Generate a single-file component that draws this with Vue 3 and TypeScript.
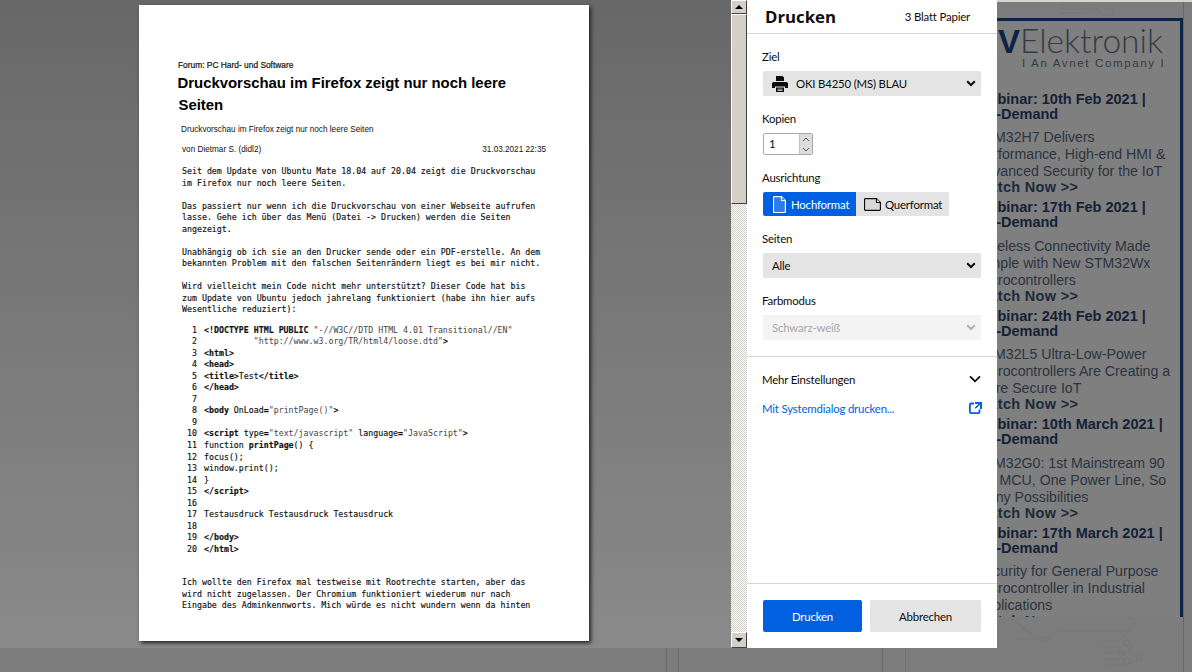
<script setup lang="ts">
interface Seg { t: string; c?: string }
const code: Seg[][] = [
  [{ t: '<!DOCTYPE HTML PUBLIC ', c: 'b' }, { t: '"-//W3C//DTD HTML 4.01 Transitional//EN"', c: 's' }],
  [{ t: '          ' }, { t: '"http://www.w3.org/TR/html4/loose.dtd"', c: 's' }, { t: '>', c: 'b' }],
  [{ t: '<html>', c: 'b' }],
  [{ t: '<head>', c: 'b' }],
  [{ t: '<title>', c: 'b' }, { t: 'Test' }, { t: '</title>', c: 'b' }],
  [{ t: '</head>', c: 'b' }],
  [],
  [{ t: '<body ', c: 'b' }, { t: 'OnLoad' }, { t: '=', c: 'b' }, { t: '"printPage()"', c: 's' }, { t: '>', c: 'b' }],
  [],
  [{ t: '<script ', c: 'b' }, { t: 'type' }, { t: '=', c: 'b' }, { t: '"text/javascript"', c: 's' }, { t: ' language' }, { t: '=', c: 'b' }, { t: '"JavaScript"', c: 's' }, { t: '>', c: 'b' }],
  [{ t: 'function ' }, { t: 'printPage', c: 'b' }, { t: '() {' }],
  [{ t: 'focus();' }],
  [{ t: 'window.print();' }],
  [{ t: '}' }],
  [{ t: '</' + 'script>', c: 'b' }],
  [],
  [{ t: 'Testausdruck Testausdruck Testausdruck' }],
  [],
  [{ t: '</body>', c: 'b' }],
  [{ t: '</html>', c: 'b' }],
]
const paragraphs: string[][] = [
  ['Seit dem Update von Ubuntu Mate 18.04 auf 20.04 zeigt die Druckvorschau', 'im Firefox nur noch leere Seiten.'],
  ['Das passiert nur wenn ich die Druckvorschau von einer Webseite aufrufen', 'lasse. Gehe ich über das Menü (Datei -> Drucken) werden die Seiten', 'angezeigt.'],
  ['Unabhängig ob ich sie an den Drucker sende oder ein PDF-erstelle. An dem', 'bekannten Problem mit den falschen Seitenrändern liegt es bei mir nicht.'],
  ['Wird vielleicht mein Code nicht mehr unterstützt? Dieser Code hat bis', 'zum Update von Ubuntu jedoch jahrelang funktioniert (habe ihn hier aufs', 'Wesentliche reduziert):'],
]
const tail: string[] = [
  'Ich wollte den Firefox mal testweise mit Rootrechte starten, aber das',
  'wird nicht zugelassen. Der Chromium funktioniert wiederum nur nach',
  'Eingabe des Adminkennworts. Mich würde es nicht wundern wenn da hinten',
]
interface Webinar { head: string[]; body: string[] }
const webinars: Webinar[] = [
  { head: ['Webinar: 10th Feb 2021 |', 'On-Demand'], body: ['STM32H7 Delivers', 'Performance, High-end HMI &', 'Advanced Security for the IoT'] },
  { head: ['Webinar: 17th Feb 2021 |', 'On-Demand'], body: ['Wireless Connectivity Made', 'Simple with New STM32Wx', 'Microcontrollers'] },
  { head: ['Webinar: 24th Feb 2021 |', 'On-Demand'], body: ['STM32L5 Ultra-Low-Power', 'Microcontrollers Are Creating a', 'More Secure IoT'] },
  { head: ['Webinar: 10th March 2021 |', 'On-Demand'], body: ['STM32G0: 1st Mainstream 90', 'nm MCU, One Power Line, So', 'Many Possibilities'] },
  { head: ['Webinar: 17th March 2021 |', 'On-Demand'], body: ['Security for General Purpose', 'Microcontroller in Industrial', 'Applications'] },
]
</script>

<template>
  <div class="screen">
    <div class="backdrop">
      <div class="topstrip"></div>
      <i class="vl l1"></i><i class="vl l2"></i><i class="vl l3"></i><i class="vl l4"></i><i class="vl l5"></i>
      <svg class="circuit top" width="70" height="18" viewBox="0 0 70 18" fill="none" stroke="#777">
        <path d="M0 3 H32 L44 14 M0 7 H30 L40 15 M0 11 H26 L32 17" /><circle cx="47" cy="5" r="2" /><circle cx="52" cy="10" r="2" /><circle cx="46" cy="15" r="2" />
      </svg>
      <div class="ad">
        <div class="logo"><b>V</b><span>Elektronik</span></div>
        <div class="tagline">I An Avnet Company I</div>
        <div v-for="w in webinars" :key="w.head[0]" class="webinar">
          <div class="w-head"><div v-for="h in w.head" :key="h">{{ h }}</div></div>
          <div class="w-body"><div v-for="b in w.body" :key="b">{{ b }}</div></div>
          <div class="w-cta">Watch Now &gt;&gt;</div>
        </div>
      </div>
      <svg class="circuit bottom" width="190" height="55" viewBox="0 0 190 55" fill="none" stroke="#787878" stroke-width="1.200">
        <path d="M15 2 L38 20 H55 M62 14 H130 L136 6 H140 M105 24 H122 L135 12 M105 30 H125 M105 36 H128 L138 28 M105 42 H130 M110 48 H128 L142 42 M20 22 H50" />
        <circle cx="48" cy="22" r="3" /><circle cx="130" cy="26" r="3" /><circle cx="124" cy="36" r="3" /><circle cx="130" cy="44" r="3" /><circle cx="142" cy="40" r="3" />
      </svg>
    </div>

    <div class="dialog">
      <div class="preview">
        <div class="sheet">
          <div class="forum">Forum: PC Hard- und Software</div>
          <h1 class="title">Druckvorschau im Firefox zeigt nur noch leere<br><span class="title2">Seiten</span></h1>
          <div class="sub">Druckvorschau im Firefox zeigt nur noch leere Seiten</div>
          <div class="meta"><span>von Dietmar S. (didl2)</span><span>31.03.2021 22:35</span></div>
          <div class="mono body">
            <p v-for="(p, i) in paragraphs" :key="i"><span v-for="l in p" :key="l" class="ln">{{ l }}</span></p>
          </div>
          <div class="mono listing">
            <div v-for="(row, i) in code" :key="i" class="row">
              <span class="num">{{ i + 1 }}</span>
              <span class="src"><span v-for="(s, j) in row" :key="j" :class="s.c">{{ s.t }}</span></span>
            </div>
          </div>
          <div class="mono tail"><span v-for="l in tail" :key="l" class="ln">{{ l }}</span></div>
        </div>
      </div>

      <div class="scrollbar">
        <div class="sb-btn up"><i class="tri tri-up"></i></div>
        <div class="sb-thumb"></div>
        <div class="sb-track"></div>
        <div class="sb-btn down"><i class="tri tri-down"></i></div>
      </div>

      <aside class="panel">
        <header class="p-head">
          <span class="p-title">Drucken</span>
          <span class="p-sheets">3 Blatt Papier</span>
        </header>
        <div class="p-form">
          <label class="lbl">Ziel</label>
          <div class="select dest">
            <svg class="printer" width="16" height="16" viewBox="0 0 16 16" fill="#0c0c0d">
              <path fill-rule="evenodd" d="M4 0h6.500L12 1.500V5H4V0zM1.800 6h12.400c1 0 1.800.8 1.800 1.800V12h-3v-1.500H3V12H0V7.800C0 6.800.8 6 1.800 6zM4 11.500h8V16H4v-4.500zM5.500 12.800v.8h5v-.8h-5zm0 1.500v.6h5v-.6h-5z" />
            </svg>
            <span>OKI B4250 (MS) BLAU</span>
            <svg class="chev" width="10" height="7" viewBox="0 0 10 7"><path d="M1.200 1.300 5 5l3.800-3.700" fill="none" stroke="#0c0c0d" stroke-width="2" /></svg>
          </div>
          <label class="lbl">Kopien</label>
          <div class="spin">
            <span class="spin-val">1</span>
            <span class="spin-btns">
              <span class="spin-btn"><svg width="8" height="5" viewBox="0 0 8 5"><path d="M1 4 4 1l3 3" fill="none" stroke="#555" /></svg></span>
              <span class="spin-btn"><svg width="8" height="5" viewBox="0 0 8 5"><path d="M1 1l3 3 3-3" fill="none" stroke="#555" /></svg></span>
            </span>
          </div>
          <label class="lbl">Ausrichtung</label>
          <div class="seg">
            <span class="seg-on">
              <svg width="13" height="17" viewBox="0 0 13 17" fill="#2b7de9" stroke="#fff" stroke-width="1.200"><path d="M1.500.6h7l3.900 3.900v11a1 1 0 0 1-1 1h-9.900a1 1 0 0 1-1-1v-14a1 1 0 0 1 1-.9z" /><path d="M8.500.6v3.900h3.900" /></svg>
              <span>Hochformat</span>
            </span>
            <span class="seg-off">
              <svg width="17" height="13" viewBox="0 0 17 13" fill="#d8d8d8" stroke="#0c0c0d" stroke-width="1.200"><path d="M1.500.6h11l3.900 3.900v7a1 1 0 0 1-1 .9h-13.900a1 1 0 0 1-1-.9v-10a1 1 0 0 1 1-.9z" /><path d="M12.500.6v3.900h3.900" /></svg>
              <span>Querformat</span>
            </span>
          </div>
          <label class="lbl">Seiten</label>
          <div class="select plain">
            <span>Alle</span>
            <svg class="chev" width="10" height="7" viewBox="0 0 10 7"><path d="M1.200 1.300 5 5l3.800-3.700" fill="none" stroke="#0c0c0d" stroke-width="2" /></svg>
          </div>
          <label class="lbl">Farbmodus</label>
          <div class="select plain off">
            <span>Schwarz-weiß</span>
            <svg class="chev" width="10" height="7" viewBox="0 0 10 7"><path d="M1.200 1.300 5 5l3.800-3.700" fill="none" stroke="#b1b1b1" stroke-width="2" /></svg>
          </div>
        </div>
        <div class="p-more">
          <div class="more-row">
            <span>Mehr Einstellungen</span>
            <svg width="12" height="8" viewBox="0 0 12 8"><path d="M1 1.300l5 5 5-5" fill="none" stroke="#0c0c0d" stroke-width="1.800" /></svg>
          </div>
          <div class="sys-row">
            <span>Mit Systemdialog drucken...</span>
            <svg width="12" height="12" viewBox="0 0 12 12" fill="none" stroke="#0060df" stroke-width="1.800"><path d="M5 1.500H2.200A1.300 1.300 0 0 0 .9 2.800v7a1.300 1.300 0 0 0 1.300 1.300h7a1.300 1.300 0 0 0 1.300-1.300V7.500" /></svg>
          </div>
        </div>
        <footer class="p-foot">
          <span class="btn primary">Drucken</span>
          <span class="btn">Abbrechen</span>
        </footer>
      </aside>
    </div>
  </div>
</template>

<style>
html, body { margin: 0; padding: 0; overflow: hidden; background: #7a7a7a; }
</style>

<style scoped>
.screen { position: relative; width: 1192px; height: 672px; overflow: hidden; font-family: "Lato", "Open Sans", sans-serif; background: #7c7c7c; }

/* dimmed page beneath the print dialog */
.backdrop { position: absolute; inset: 0; }
.topstrip { position: absolute; left: 0; right: 0; top: 0; height: 2px; background: #d8d4cc; }
.vl { position: absolute; top: 648px; bottom: 0; width: 1px; background: #6c6c6c; }
.l1 { left: 666px; } .l2 { left: 678px; } .l3 { left: 882px; } .l4 { left: 905px; background: #747474; }
.l5 { left: 1183px; top: 2px; background: #666; }
.ad {
  position: absolute; left: 965px; top: 18px; width: 215px; height: 596px; overflow: hidden;
  border-top: 3px solid #0c2344; border-right: 3px solid #0c2344; background: #7f7f7f; color: #1d2a3a;
  font-family: "Liberation Sans", Arial, sans-serif;
}
.logo { display: flex; align-items: baseline; height: 37px; padding: 1px 0 0 12px; box-sizing: border-box; color: #333b46; font-family: "Lato", "Open Sans", sans-serif; font-size: 33.500px; line-height: 36px; font-weight: 300; }
.logo b { font-family: "Liberation Sans", sans-serif; font-size: 33px; font-weight: 700; color: #0c2344; margin-left: 21px; }
.tagline { margin: -2px 0 0 57px; font-size: 11.500px; letter-spacing: 1.650px; color: #333b46; line-height: 14px; white-space: nowrap; }
.webinar { margin-left: 11px; height: 108.500px; }
.tagline + .webinar { margin-top: 19.500px; }
.w-head { font-weight: 700; font-size: 14.500px; line-height: 15px; color: #142238; white-space: nowrap; padding-top: 2px; }
.w-body { margin-top: 7.500px; font-size: 14.150px; line-height: 17px; color: #2b3440; white-space: nowrap; }
.w-cta { margin-top: -1px; font-weight: 700; font-size: 14.500px; letter-spacing: .3px; line-height: 17px; color: #1d2a3a; }
.circuit { position: absolute; }
.circuit.top { left: 1060px; top: 2px; }
.circuit.bottom { left: 997px; top: 617px; }

/* dialog row */
.dialog { position: absolute; left: 0; top: 0; width: 997px; height: 648px; display: flex; }
.preview { width: 731px; height: 648px; background: linear-gradient(180deg, #686868, #8a8a8a); overflow: hidden; }
.sheet {
  width: 450px; height: 636px; margin: 5px 0 0 139px; background: #fff; overflow: hidden; box-sizing: border-box; padding-top: 55px; color: #111;
  box-shadow: 2px 2px 4px #222; font-family: "Liberation Sans", Arial, sans-serif;
}
.forum { margin-left: 39px; font-size: 8.400px; line-height: 10px; -webkit-text-stroke: .2px #111; }
.title { margin: 2px 0 0 38.500px; font-size: 14.900px; line-height: 22px; font-weight: 700; color: #000; }
.title2 { margin-left: 1px; }
.sub { margin: 9px 0 0 42px; font-size: 8.200px; line-height: 10px; }
.meta { margin: 10px 43px 0 43px; display: flex; justify-content: space-between; font-size: 8.200px; line-height: 10px; }
.mono { font-family: "DejaVu Sans Mono", "Liberation Mono", monospace; font-size: 8.280px; line-height: 11.500px; color: #111; white-space: pre; -webkit-text-stroke: .15px #111; }
.ln { display: block; }
.body { margin: 11px 0 0 43px; }
.body p { margin: 0 0 11.500px; }
.listing { margin: -2.500px 0 0 0; }
.row { display: flex; height: 11.550px; }
.num { width: 58px; text-align: right; flex: none; }
.src { margin-left: 7px; }
.b { font-weight: 700; }
.s { color: #444; -webkit-text-stroke: 0; }
.tail { margin: 22px 0 0 43px; }

/* scrollbar */
.scrollbar { width: 16px; height: 648px; display: flex; flex-direction: column; flex: none; }
.sb-btn { height: 16px; flex: none; box-sizing: border-box; background: #d4d0c8; border: 1px solid; border-color: #fff #404040 #404040 #fff; display: flex; align-items: center; justify-content: center; }
.up { height: 14px; }
.tri { width: 0; height: 0; border-left: 4px solid transparent; border-right: 4px solid transparent; }
.tri-up { border-bottom: 4px solid #000; }
.tri-down { border-top: 4px solid #000; }
.sb-thumb { height: 190px; flex: none; box-sizing: border-box; background: #d4d0c8; border: 1px solid; border-color: #fff #404040 #404040 #fff; }
.sb-track { flex: 1; background: repeating-conic-gradient(#d4d0c8 0 25%, #fff 0 50%) 0 0 / 2px 2px; }

/* panel */
.panel { width: 250px; height: 648px; background: #fff; display: flex; flex-direction: column; flex: none; color: #0c0c0d; font-size: 11.400px; letter-spacing: -.18px; }
.p-head { height: 33px; flex: none; border-bottom: 1px solid #d7d7db; display: flex; align-items: center; justify-content: space-between; padding: 0 27px 0 18px; }
.p-title { font-size: 16.800px; font-weight: 700; font-family: "Open Sans", sans-serif; letter-spacing: 0; }
.p-form { padding: 0 16px; height: 322px; flex: none; border-bottom: 1px solid #d7d7db; }
.lbl { display: block; height: 16px; line-height: 16px; margin: 15px 0 6px -1px; }
.select { height: 25px; border-radius: 2px; background: #e4e4e4; display: flex; align-items: center; padding: 0 5px 0 9px; }
.select .chev { margin-left: auto; }
.dest { gap: 8px; }
.off { background: #f3f3f3; color: #a8a8a8; }
.spin { width: 50px; height: 22px; box-sizing: border-box; border: 1px solid #a9a9a9; border-radius: 2px; display: flex; }
.spin-val { flex: 1; padding-left: 5px; line-height: 20px; }
.spin-btns { width: 12px; display: flex; flex-direction: column; background: #dcdcdc; border-left: 1px solid #c4c4c4; }
.spin-btn { flex: 1; display: flex; align-items: center; justify-content: center; }
.seg { display: flex; width: max-content; height: 24px; border-radius: 2px; overflow: hidden; }
.seg-on, .seg-off { display: flex; align-items: center; box-sizing: border-box; }
.seg svg { flex: none; }
.seg-on { width: 93px; background: #0060df; color: #fff; padding-left: 10px; gap: 5px; }
.seg-off { width: 93px; background: #e4e4e4; padding-left: 8px; gap: 4px; }
.p-more { flex: 1; padding: 0 16px; }
.more-row, .sys-row { display: flex; align-items: center; justify-content: space-between; }
.more-row { margin-top: 14px; height: 16px; margin-left: -1px; }
.sys-row { margin-top: 13px; height: 16px; color: #0060df; margin-left: -1px; position: relative; }
.sys-row::after { content: ""; position: absolute; right: -.5px; top: 2px; width: 6.500px; height: 6.500px; background: linear-gradient(#0060df,#0060df) 100% 0 / 100% 2px no-repeat, linear-gradient(#0060df,#0060df) 100% 0 / 2px 100% no-repeat, linear-gradient(135deg, transparent 42%, #0060df 42% 58%, transparent 58%) 0 100% / 100% 100% no-repeat; }
.p-foot { height: 65px; flex: none; border-top: 1px solid #d7d7db; display: flex; gap: 8px; padding: 16px 16px 0; box-sizing: border-box; }
.btn { width: 111px; height: 32px; border-radius: 2px; background: #e4e4e4; display: flex; align-items: center; justify-content: center; }
.primary { width: 99px; background: #0060df; color: #fff; }
</style>
